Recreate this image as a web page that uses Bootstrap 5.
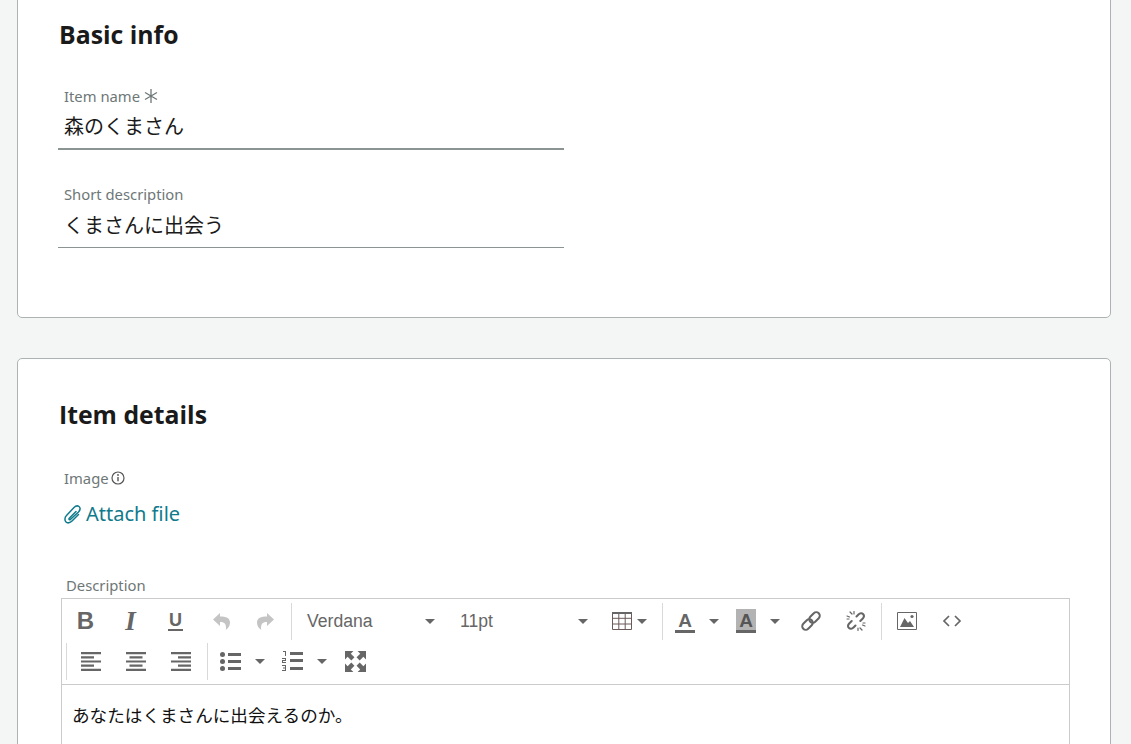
<!DOCTYPE html>
<html lang="en">
<head>
  <meta charset="UTF-8">
  <title>Edit item</title>
  <link href="https://cdn.jsdelivr.net/npm/bootstrap@5.3.2/dist/css/bootstrap.min.css" rel="stylesheet">
  <style>
    html, body { height: 744px; overflow: hidden; }
    body {
      background-color: #f4f6f5;
      font-family: "Noto Sans", "Noto Sans CJK JP", sans-serif;
      color: #1a1a1a;
    }
    .page-wrap { padding: 0 20px 0 17px; }
    .panel {
      background: #fff;
      border: 1px solid #adb3b3;
      border-radius: 5px;
      padding: 0 40px;
    }
    .panel-basic { margin-top: -60px; padding-top: 76px; height: 378px; margin-bottom: 40px; }
    .panel-details { padding-top: 38px; height: 600px; }
    .panel-title { font-family: "Open Sans", "Noto Sans", sans-serif; font-size: 24.8px; font-weight: 700; line-height: 34px; margin: 0; padding: 0 0 2px 1px; color: #1a1a1a; }
    .field { width: 506px; }
    .field-label { display: block; font-size: 14.8px; line-height: 22px; color: #6e7777; padding-left: 6px; margin: 0; }
    .label-info { gap: 2px; }
    .field .form-control {
      font-family: "Noto Sans CJK JP", "Noto Sans", sans-serif;
      font-size: 20px;
      line-height: 30px;
      color: #1a1a1a;
      border: 0;
      border-bottom: 1px solid #8c9393;
      border-radius: 0;
      padding: 4px 6px 8px;
      height: 43px;
      box-shadow: none;
    }
    .field .field-focus { border-bottom-width: 2px; padding-top: 3px; }
    .attach {
      font-size: 20px;
      line-height: 28px;
      color: #0f7a8c;
      text-decoration: none;
      padding-left: 6px;
    }
    .editor { margin-left: 3px; width: 1009px; border: 1px solid #cbcbcb; border-bottom: 0; background: #fff; }
    .desc-label { padding-left: 8px; line-height: 26px; }
    .tb { border-bottom: 1px solid #cbcbcb; color: #666; height: 86px; font-family: "Liberation Sans", sans-serif; }
    .tb-row { height: 40px; }
    .tb-row-a { padding-top: 2px; height: 42px; padding-left: 1px; }
    .tb-btn { width: 45px; height: 40px; flex: none; }
    .tb-btn svg { display: block; }
    .tb-sep { width: 1px; height: 37px; background: #d9d9d9; flex: none; margin: 0 0 0 3px; }
    .tb-list { width: 153px; height: 40px; padding: 0 10px 0 15px; font-size: 17.6px; flex: none; }
    .tb-split { width: 61px; height: 40px; flex: none; padding-left: 12px; gap: 14px; }
    .tb-glyph { font-size: 24px; line-height: 1; font-weight: 700; }
    .caret-d { width: 0; height: 0; border-left: 5px solid transparent; border-right: 5px solid transparent; border-top: 5px solid #666; flex: none; }
    .is-off { color: #c4c4c4; }
    .glyph-i { font-family: "Liberation Serif", serif; font-style: italic; font-size: 27px; }
    .glyph-u { display: block; font-size: 18px; line-height: 17px; width: 15px; text-align: center; border-bottom: 2px solid #666; }
    .glyph-a { font-size: 19px; display: block; width: 20px; text-align: center; line-height: 19px; padding-top: 2px; border-bottom: 3px solid #666; }
    .glyph-b { background: #b3b3b3; color: #555; }
    .editor-body { padding: 17px 10px; font-family: "Noto Sans CJK JP", sans-serif; font-size: 17.6px; line-height: 26px; color: #111; }
  </style>
</head>
<body>

<div class="page-wrap">
  <div class="panel panel-basic">
    <h2 class="panel-title">Basic info</h2>
    <div class="field" style="margin-top:32px">
      <label class="field-label">Item name <svg width="14" height="14" viewBox="0 0 14 14" class="align-text-top" style="margin-top:3px"><path d="M7 0v14M1 3.500l12 7M13 3.500l-12 7" stroke="#6e7777" stroke-width="1.300" fill="none"/></svg></label>
      <input class="form-control field-focus" type="text" value="森のくまさん">
    </div>
    <div class="field" style="margin-top:33px">
      <label class="field-label">Short description</label>
      <input class="form-control" type="text" value="くまさんに出会う">
    </div>
  </div>

  <div class="panel panel-details">
    <h2 class="panel-title">Item details</h2>
    <label class="field-label label-info d-flex align-items-center" style="margin-top:34px">Image
      <svg width="14" height="14" viewBox="0 0 14 14"><circle cx="7" cy="7" r="6" fill="none" stroke="#555" stroke-width="1.200"/><path d="M7 6v4.200" stroke="#555" stroke-width="1.400"/><circle cx="7" cy="4" r=".9" fill="#555"/></svg>
    </label>
    <div class="d-flex align-items-center" style="margin-top:11px">
      <a class="attach d-flex align-items-center" href="#">
        <svg width="18" height="19" viewBox="0 0 18 19" style="margin-right:4px"><path d="M12 6.500L5.500 13C4.500 14 5 15 6 14.800L14.500 7C16.500 5 16.500 2.500 15 1.500C13.500 .5 11.500 1 10 2.500L2.500 10.500C.5 12.500 .5 15.500 2 17C3.500 18.500 6 18 8 16L14.500 9.500" fill="none" stroke="#0f7a8c" stroke-width="1.500" stroke-linecap="round"/></svg>Attach file</a>
    </div>
    <label class="field-label desc-label" style="margin-top:44px">Description</label>
    <div class="editor">
      <div class="tb">
        <div class="tb-row tb-row-a d-flex align-items-center">
          <div class="tb-btn d-flex align-items-center justify-content-center"><span class="tb-glyph">B</span></div>
          <div class="tb-btn d-flex align-items-center justify-content-center"><span class="tb-glyph glyph-i">I</span></div>
          <div class="tb-btn d-flex align-items-center justify-content-center"><span class="tb-glyph glyph-u">U</span></div>
          <div class="tb-btn d-flex align-items-center justify-content-center is-off">
            <svg width="18" height="18" viewBox="0 0 18 18"><path d="M8 1L1 7.500 8 14v-4c4 0 6 1.500 6 6 0 .8 0 1.500-.3 2 2.800-2 4.300-4.500 4.300-7.500C18 6 14 4.500 8 4.500z" fill="currentColor"/></svg>
          </div>
          <div class="tb-btn d-flex align-items-center justify-content-center is-off">
            <svg width="18" height="18" viewBox="0 0 18 18"><path d="M10 1l7 6.500L10 14v-4c-4 0-6 1.500-6 6 0 .8 0 1.500.3 2C1.500 16 0 13.500 0 10.500 0 6 4 4.500 10 4.500z" fill="currentColor"/></svg>
          </div>
          <div class="tb-sep"></div>
          <div class="tb-list d-flex align-items-center justify-content-between"><span>Verdana</span><span class="caret-d"></span></div>
          <div class="tb-list d-flex align-items-center justify-content-between"><span>11pt</span><span class="caret-d"></span></div>
          <div class="d-flex align-items-center" style="width:54px;padding-left:14px;gap:5px;flex:none">
            <svg width="20" height="18" viewBox="0 0 20 18" style="flex:none"><path d="M.5.5h19v17H.5zM.5 6.300h19M.5 12h19M6.800.5v17M13.200.5v17" fill="none" stroke="#6b5a5a"/><path d="M0 0h20v2H0z" fill="#666"/></svg>
            <span class="caret-d"></span>
          </div>
          <div class="tb-sep" style="margin:0 0 0 10px"></div>
          <div class="tb-split d-flex align-items-center">
            <span class="tb-glyph glyph-a">A</span><span class="caret-d"></span>
          </div>
          <div class="tb-split d-flex align-items-center">
            <span class="tb-glyph glyph-a glyph-b">A</span><span class="caret-d"></span>
          </div>
          <div class="tb-btn d-flex align-items-center justify-content-center" style="margin-left:3px">
            <svg width="20" height="20" viewBox="0 0 20 20"><g fill="none" stroke="#666" stroke-width="2"><rect x="10" y="0.500" width="7" height="12" rx="3.500" transform="rotate(45 13.500 6.500)"/><rect x="3" y="7.500" width="7" height="12" rx="3.500" transform="rotate(45 6.500 13.500)"/></g></svg>
          </div>
          <div class="tb-btn d-flex align-items-center justify-content-center">
            <svg width="20" height="20" viewBox="0 0 20 20"><g fill="none" stroke="#666" stroke-width="2" stroke-linecap="round"><path d="M10.500 5.500l2-2c1.500-1.500 3.500-1.500 4.500-.5s1.200 3-.2 4.500l-2.500 2.500M9.500 14.500l-2 2c-1.500 1.500-3.500 1.500-4.500.5s-1.200-3 .2-4.500l2.500-2.500"/></g><g stroke="#666" stroke-width="1.200" stroke-linecap="round"><path d="M4 1l2 2M8 .5v2.500M1 5l2.500 1M16 19l-2-2M12 19.500V17M19 15l-2.500-1M1 8h2M17 12h2"/></g></svg>
          </div>
          <div class="tb-sep" style="margin:0 2px 0 3px"></div>
          <div class="tb-btn d-flex align-items-center justify-content-center">
            <svg width="20" height="18" viewBox="0 0 20 18"><path d="M.5.5h19v17H.5z" fill="none" stroke="#666"/><path d="M3 15l4.500-9 3.500 5 2-2 4 6z" fill="#666"/><circle cx="15" cy="4.500" r="1.600" fill="#666"/></svg>
          </div>
          <div class="tb-btn d-flex align-items-center justify-content-center">
            <svg width="20" height="14" viewBox="0 0 20 14"><path d="M7 2L2 7l5 5M13 2l5 5-5 5" fill="none" stroke="#666" stroke-width="1.700"/></svg>
          </div>
        </div>
        <div class="tb-row d-flex align-items-center" style="padding-left:4px">
          <div class="tb-sep" style="margin:0 1px 0 0"></div>
          <div class="tb-btn d-flex align-items-center justify-content-center">
            <svg width="20" height="19" viewBox="0 0 20 19"><path d="M0 0h20v2.200H0zM0 4.200h13v2.200H0zM0 8.400h20v2.200H0zM0 12.600h13v2.200H0zM0 16.800h20V19H0z" fill="#666"/></svg>
          </div>
          <div class="tb-btn d-flex align-items-center justify-content-center">
            <svg width="20" height="19" viewBox="0 0 20 19"><path d="M0 0h20v2.200H0zM3.500 4.200h13v2.200h-13zM0 8.400h20v2.200H0zM3.500 12.600h13v2.200h-13zM0 16.800h20V19H0z" fill="#666"/></svg>
          </div>
          <div class="tb-btn d-flex align-items-center justify-content-center">
            <svg width="20" height="19" viewBox="0 0 20 19"><path d="M0 0h20v2.200H0zM7 4.200h13v2.200H7zM0 8.400h20v2.200H0zM7 12.600h13v2.200H7zM0 16.800h20V19H0z" fill="#666"/></svg>
          </div>
          <div class="tb-sep" style="margin:0 1px 0 4px"></div>
          <div class="d-flex align-items-center" style="width:61px;padding-left:11px;gap:14px;flex:none">
            <svg width="21" height="19" viewBox="0 0 21 19" style="flex:none"><circle cx="2.500" cy="2.500" r="2.500" fill="#666"/><circle cx="2.500" cy="9.500" r="2.500" fill="#666"/><circle cx="2.500" cy="16.500" r="2.500" fill="#666"/><path d="M8 1h13v3H8zM8 8h13v3H8zM8 15h13v3H8z" fill="#666"/></svg>
            <span class="caret-d"></span>
          </div>
          <div class="d-flex align-items-center" style="width:61px;padding-left:12px;gap:14px;flex:none">
            <svg width="21" height="20" viewBox="0 0 21 20" style="flex:none"><path d="M1 0h3v5H3V1H1zM0 7h4v3H1v1h3v1H0V9h3V8H0zM0 14h4v6H0v-1h3v-1.500H1v-1h2V15H0zM8 1h13v3H8zM8 8h13v3H8zM8 16h13v3H8z" fill="#666"/></svg>
            <span class="caret-d"></span>
          </div>
          <div class="tb-btn d-flex align-items-center justify-content-center" style="margin-left:2px">
            <svg width="21" height="21" viewBox="0 0 20 20"><path d="M0 0h8L5.500 2.500l3.500 3.500-3 3-3.500-3.500L0 8zM20 0v8l-2.500-2.500L14 9l-3-3 3.500-3.500L12 0zM0 20v-8l2.500 2.500L6 11l3 3-3.500 3.500L8 20zM20 20h-8l2.500-2.500L11 14l3-3 3.500 3.500L20 12z" fill="#666"/></svg>
          </div>
        </div>
      </div>
      <div class="editor-body">あなたはくまさんに出会えるのか。</div>
    </div>
  </div>
</div>

</body>
</html>
